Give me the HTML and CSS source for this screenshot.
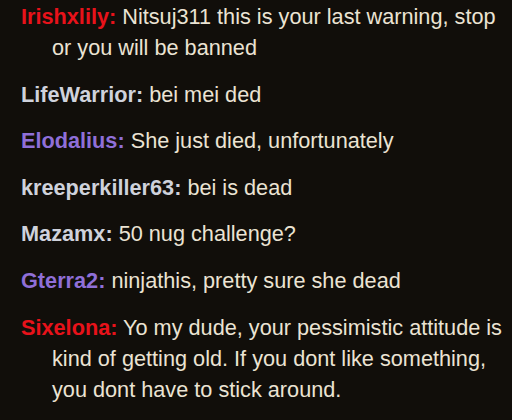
FILE: index.html
```html
<!DOCTYPE html>
<html>
<head>
<meta charset="utf-8">
<link rel="stylesheet" href="styles.css">
</head>
<body>
<div class="chat">
  <div class="msg"><span class="user red">Irishxlily:</span> Nitsuj311 this is your last warning, stop or you will be banned</div>
  <div class="msg"><span class="user gray">LifeWarrior:</span> bei mei ded</div>
  <div class="msg"><span class="user purple">Elodalius:</span> She just died, unfortunately</div>
  <div class="msg"><span class="user gray">kreeperkiller63:</span> bei is dead</div>
  <div class="msg"><span class="user gray">Mazamx:</span> 50 nug challenge?</div>
  <div class="msg"><span class="user purple">Gterra2:</span> ninjathis, pretty sure she dead</div>
  <div class="msg"><span class="user red">Sixelona:</span> Yo my dude, your pessimistic attitude is kind of getting old. If you dont like something, you dont have to stick around.</div>
</div>
</body>
</html>
```

FILE: styles.css
```css
html, body {
  margin: 0;
  padding: 0;
  background: #110e0a;
}
body {
  width: 512px;
  height: 420px;
  overflow: hidden;
}
.chat {
  display: flex;
  flex-direction: column;
  gap: 15.6px;
  padding: 1px 4px 0 52px;
  font-family: "Liberation Sans", Arial, sans-serif;
  font-size: 21.7px;
  line-height: 31px;
  color: #ebe3d3;
}
.msg {
  text-indent: -31px;
}
.user {
  font-weight: bold;
}
.red { color: #e8121a; }
.purple { color: #8f6fd8; }
.gray { color: #cfd2dc; }
```
